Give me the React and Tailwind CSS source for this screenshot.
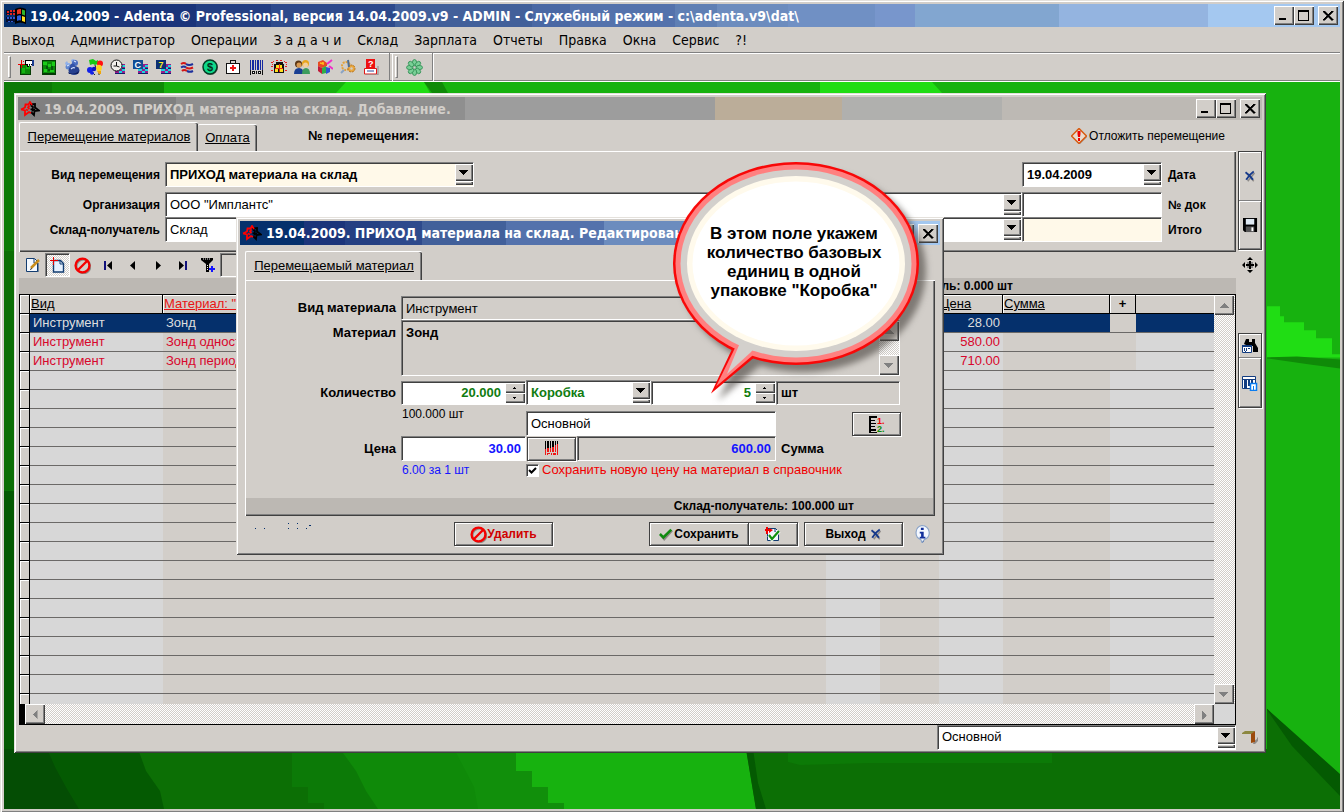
import React from "react";

const frame =
  "shadow-[inset_1px_1px_0_#e4e1dc,inset_-1px_-1px_0_#404040,inset_2px_2px_0_#ffffff,inset_-2px_-2px_0_#808080]";
const sunken =
  "border border-t-[#808080] border-l-[#808080] border-b-white border-r-white shadow-[inset_1px_1px_0_#404040]";
const raised =
  "bg-[#d2cec9] shadow-[inset_1px_1px_0_#ffffff,inset_-1px_-1px_0_#404040,inset_-2px_-2px_0_#808080]";
const framed =
  "border border-[#404040] bg-[#d2cec9] shadow-[inset_1px_1px_0_#ffffff,inset_-1px_-1px_0_#808080,1px_1px_0_#ffffff]";
const dither =
  "bg-[repeating-conic-gradient(#ffffff_0_25%,#d2cec9_0_50%)] bg-[length:2px_2px]";
const captionFont = "font-['DejaVu_Sans_Condensed','Noto_Sans',sans-serif]";

function Icon({ children, size = 16, className = "" }) {
  return (
    <svg width={size} height={size} viewBox="0 0 16 16" aria-hidden="true" className={`shrink-0 ${className}`}>
      {children}
    </svg>
  );
}

/* ---------- toolbar drawings ---------- */

const Stripes = () => (
  <g shapeRendering="crispEdges">
    <path d="M5 5h10v10H5z" fill="#9a1b8c" />
    <path d="M6 6h3v2H6zM12 6h3v2h-3zM9 8h3v2H9zM5 10h4v2H5zM12 10h3v2h-3zM9 12h3v2H9z" fill="#19d6e0" />
    <path d="M5 14h10v1H5zM6 9h3v1H6zM12 9h3v1h-3z" fill="#10206b" />
  </g>
);

const MainIcons = {
  "Рабочее место": (
    <g shapeRendering="crispEdges">
      <path d="M2 5h11v11H2z" fill="#063d04" />
      <path d="M3 6h9v9H3z" fill="#0c8a0a" />
      <path d="M4 9h3v5H4zM8 7h4v3H8z" fill="#15b512" />
      <path d="M7 1h9v6h-2V6h-1v2h-1V6h-1v2H9V6H7z" fill="#000" />
      <path d="M8 2h6v3H8zM10 5h1v2h-1zM12 5h1v2h-1z" fill="#fff" />
      <path d="M14 1h2v6h-2z" fill="#1b3c90" />
      <path d="M0 5h7v1H0zM3 1h1v8H3zM5 2h1v1H5z" fill="#e80000" />
    </g>
  ),
  "Фон": (
    <g shapeRendering="crispEdges">
      <path d="M1 1h14v15H1z" fill="#053b05" />
      <path d="M2 2h12v12H2z" fill="#0c8a0a" />
      <path d="M2 3h4v3H2zM7 5h3v3H7zM11 3h3v4h-3zM3 10h3v3H3zM9 11h4v2H9z" fill="#1bcc18" />
      <path d="M5 7h2v3H5zM10 7h2v4h-2zM7 10h2v2H7z" fill="#04580a" />
    </g>
  ),
  "Пациенты": (
    <g>
      <path d="M1 4l2-2 1 2 2 0-1 4-2 1zM7 1l2-1 3 1-1 3 1 2-3 1z" fill="#8fb0ea" />
      <ellipse cx="4.500" cy="8" rx="3" ry="2.500" fill="#5f86d0" />
      <circle cx="11" cy="4" r="3" fill="#4a6cc0" />
      <ellipse cx="10" cy="11.500" rx="5.500" ry="4.500" fill="#26408f" />
      <circle cx="8.500" cy="7" r="2.500" fill="#3352a8" />
      <path d="M7 10q2-2 4-1M10 2l2 1M3 7l2-1" stroke="#d6e4ff" strokeWidth="1.200" fill="none" />
      <path d="M4 13q5 4 11-1l-1 3H5z" fill="#101f5c" />
    </g>
  ),
  "Шары": (
    <g>
      <path d="M5 13l3 3M8 6l1 4M12 9v7" stroke="#222" fill="none" />
      <path d="M2 1l4-1 3 2 2-1v4l-3 1-2-1-3 1z" fill="#17c914" />
      <circle cx="13" cy="4.500" r="3" fill="#ff1212" />
      <ellipse cx="3" cy="11" rx="3" ry="3" fill="#1220e8" />
      <circle cx="7" cy="10" r="2.200" fill="#0d14c0" />
      <ellipse cx="5" cy="14" rx="2" ry="1.800" fill="#1220e8" />
      <ellipse cx="12" cy="9" rx="2.800" ry="3.200" fill="#ffd21a" />
      <path d="M10 12h4v3h-2z" fill="#f0a50c" />
    </g>
  ),
  "График": (
    <g>
      <Stripes />
      <circle cx="6.500" cy="6.500" r="5.500" fill="#f2f0ec" stroke="#111" />
      <path d="M6.500 3v4H3.500M6.500 7l3 1" stroke="#111" fill="none" />
    </g>
  ),
  "Календарь": (
    <g>
      <Stripes />
      <path d="M0 1h10v9H0z" fill="#114c93" />
      <text x="1.500" y="9" fontSize="9" fontWeight="700" fill="#fff" fontFamily="Liberation Sans, sans-serif">C</text>
    </g>
  ),
  "Неделя": (
    <g>
      <Stripes />
      <path d="M0 1h10v9H0z" fill="#0c2f73" />
      <text x="2.500" y="9" fontSize="9" fontWeight="700" fill="#ffee22" fontFamily="Liberation Sans, sans-serif">7</text>
    </g>
  ),
  "Обмен": (
    <g fill="none" strokeWidth="2">
      <path d="M2 5q3-2 5 0" stroke="#d41616" />
      <path d="M7 5q3 2 7 0" stroke="#1d2f9c" />
      <path d="M2 8.500q3-2 5 0" stroke="#1d2f9c" />
      <path d="M7 8.500q3 2 7 0" stroke="#d41616" />
      <path d="M3 12q2-2 5 0" stroke="#d41616" />
      <path d="M8 12q3 1.500 6 0" stroke="#1d2f9c" />
    </g>
  ),
  "Касса": (
    <g>
      <circle cx="8.500" cy="8.500" r="7.500" fill="#6f6f6f" />
      <circle cx="8" cy="8" r="7" fill="#0fd98a" stroke="#063c25" strokeWidth="1.500" />
      <text x="5" y="12" fontSize="11" fontWeight="700" fill="#04301c" fontFamily="Liberation Sans, sans-serif">$</text>
    </g>
  ),
  "Аптечка": (
    <g shapeRendering="crispEdges">
      <path d="M5 1h6v3h4v11H1V4h4z" fill="#111" />
      <path d="M6 2h4v2H6z" fill="#d2cec9" />
      <path d="M2 5h12v9H2z" fill="#fff" />
      <path d="M7 6h2v2h2v2H9v2H7v-2H5V8h2z" fill="#f01414" />
    </g>
  ),
  "Штрихкод": (
    <g shapeRendering="crispEdges">
      <path d="M2 1h1v10H2zM4 1h2v10H4zM7 1h1v10H7zM9 1h2v10H9zM12 1h1v10h-1zM14 1h1v10h-1z" fill="#1428a0" />
      <path d="M2 11h1v5H2zM14 11h1v5h-1zM4 12h3v3H4zM8 12h1v3H8zM10 12h3v3h-3z" fill="#111" />
      <path d="M5 13h1v1H5zM11 13h1v1h-1z" fill="#fff" />
    </g>
  ),
  "Лаборатория": (
    <g shapeRendering="crispEdges">
      <path d="M5 3h7v2h1v9H3V5h2z" fill="#111" />
      <path d="M5 6h3v3H5zM9 10h3v3H9z" fill="#ffe01c" />
      <path d="M9 6h2v3H9zM4 10h3v3H4z" fill="#ffe01c" />
      <path d="M8 5h1v8H8zM4 9h8v1H4z" fill="#e82a14" />
      <path d="M0 3h2v1H0zM0 7h2v1H0zM0 11h2v1H0zM14 3h2v1h-2zM14 7h2v1h-2zM14 11h2v1h-2zM1 5h1v1H1zM15 5h1v1h-1zM2 2h1v1H2zM13 2h1v1h-1zM5 1h2v1H5zM9 1h2v1H9z" fill="#e82020" />
    </g>
  ),
  "Сотрудники": (
    <g>
      <circle cx="4.500" cy="5" r="3.500" fill="#5a3513" />
      <circle cx="5" cy="6" r="2.500" fill="#d99a52" />
      <path d="M0 15q0-6 5-6t4 6z" fill="#1a3f92" />
      <circle cx="11.500" cy="4.500" r="3.500" fill="#e8a51e" />
      <circle cx="11.500" cy="6" r="2.500" fill="#f3cf9c" />
      <path d="M8 15q0-6 4-6t4 6z" fill="#3d9c5c" />
    </g>
  ),
  "Отчёты": (
    <g>
      <path d="M1 3l5-2 4 3v3L5 9 1 7z" fill="#e84a20" />
      <path d="M1 7l4 2v6l-4-3z" fill="#c01a3a" />
      <path d="M5 9l4-2v7l-4 1z" fill="#2fae48" />
      <path d="M9 8l4 1v4l-4 2z" fill="#2d55d2" />
      <path d="M10 5l5-4M12 7l4 3" stroke="#f02cc8" strokeWidth="2" />
      <path d="M3 4l4 1M6 3v3" stroke="#ffbe1c" strokeWidth="1.500" />
    </g>
  ),
  "Настройка": (
    <g>
      <circle cx="6" cy="7" r="4" fill="none" stroke="#e2a23b" strokeWidth="2" strokeDasharray="2 1" />
      <circle cx="11.500" cy="9.500" r="3.500" fill="#e8a73f" stroke="#b4711d" strokeDasharray="2 1" />
      <path d="M8 1l1 7" stroke="#4d6d92" strokeWidth="2" />
      <path d="M1 14l3-3" stroke="#8aa3c4" strokeWidth="2" />
      <circle cx="11.500" cy="9.500" r="1.200" fill="#d2cec9" />
    </g>
  ),
  "Справка": (
    <g>
      <path d="M3 0h9v9H3z" fill="#ee1111" />
      <text x="5" y="8" fontSize="9" fontWeight="700" fill="#fff" fontFamily="Liberation Sans, sans-serif">?</text>
      <path d="M1.500 9.500h12v5.500h-12z" fill="#fff" stroke="#e01818" />
      <path d="M4 12h7" stroke="#2a4b9a" />
      <path d="M15 7v9H3" stroke="#8a8a8a" fill="none" />
    </g>
  ),
};

const Clover = () => (
  <Icon size={17}>
    {[0, 45, 90, 135, 180, 225, 270, 315].map((a) => (
      <ellipse key={a} cx="8" cy="3.500" rx="2" ry="3" fill="#79cf96" stroke="#2f8d52" strokeWidth="0.800" transform={`rotate(${a} 8 8)`} />
    ))}
  </Icon>
);

const WindowsLogo = () => (
  <svg width="22" height="20" viewBox="0 0 22 20" aria-hidden="true" className="shrink-0">
    <path d="M9 3q5-3 11 0v15q-6-3-11 0z" fill="#000" />
    <path d="M11 4q2-1.500 4-1v5q-2-.500-4 .500z" fill="#e8341c" />
    <path d="M16 3.500l3 1v5l-3-1z" fill="#2fb52a" />
    <path d="M11 10q2-1 4-.500v5q-2-.500-4 .500z" fill="#2a5cd8" />
    <path d="M16 10l3 1v5l-3-1z" fill="#ffdd1c" />
    <path d="M0 4h9v5H0zM0 11h9v5H0z" fill="#061030" />
    <path d="M1 5h2v2H1zM4 4h2v2H4zM7 4h2v2H7zM1 8h2v1H1zM4 7h2v2H4zM7 7h2v2H7z" fill="#e0241c" />
    <path d="M1 11h2v2H1zM4 11h2v2H4zM7 11h2v2H7zM2 15h2v1H2zM5 15h2v1H5z" fill="#3358d0" />
  </svg>
);

const AppMark = () => (
  <svg width="20" height="16" viewBox="0 0 20 16" aria-hidden="true" className="shrink-0" fill="none" strokeWidth="1.800">
    <path d="M10 3.500l5-.500v3.500l4 3-4.500.500-.500 4-3-3" stroke="#000" />
    <path d="M10.500 8.500l2-.500.500-2-2-1.500M12 10l3-2" stroke="#000" />
    <path d="M1 8.500l4-2 .500-3 3 0 1.500-2.500 2 3M1 8.500l4 1V14l4-3 2 1" stroke="#f00" />
    <path d="M9.500 8L8 6.500l1.500-2M8 9.500l-2-1" stroke="#f00" />
  </svg>
);

const NoEntry = ({ size = 17 }) => (
  <Icon size={size}>
    <circle cx="9" cy="9" r="6.500" fill="none" stroke="#8e8a86" strokeWidth="1.500" />
    <circle cx="8" cy="8" r="6.500" fill="none" stroke="#f50000" strokeWidth="2.200" />
    <path d="M3.500 12.500l9-9" stroke="#f50000" strokeWidth="2.200" />
  </Icon>
);

const BlueCross = ({ size = 12 }) => (
  <Icon size={size}>
    <path d="M4 5l9 10M14 4L5 15" stroke="#8e8a86" strokeWidth="2" />
    <path d="M2 3q6 4 10 10M13 2Q7 6 3 13" stroke="#173a8a" strokeWidth="2.600" fill="none" />
  </Icon>
);

/* ---------- shared pieces ---------- */

function CaptionButton({ label, children, className = "" }) {
  return (
    <button type="button" aria-label={label} className={`flex h-[19px] w-5 items-center justify-center ${raised} ${className}`}>
      <svg width="14" height="13" viewBox="0 0 14 13" aria-hidden="true" shapeRendering="crispEdges">{children}</svg>
    </button>
  );
}

function CaptionButtons() {
  return (
    <div className="ml-auto flex pr-0.5">
      <CaptionButton label="Свернуть"><path d="M2 9h7v2H2z" /></CaptionButton>
      <CaptionButton label="Развернуть"><path d="M1 1h11v2H1zM1 3h1v8H1zM11 3h1v8h-1zM1 11h11v1H1z" /></CaptionButton>
      <CaptionButton label="Закрыть" className="ml-1">
        <path d="M2 2h2v1h1v1h1v1h2V4h1V3h1V2h2v1h-1v1h-1v1H9v1H8v1h1v1h1v1h1v1h1v1h-2v-1H9V9H8V8H6v1H5v1H4v1H2v-1h1V9h1V8h1V7h1V6H5V5H4V4H3V3H2z" stroke="#000" strokeWidth="0.500" />
      </CaptionButton>
    </div>
  );
}

function Arrow({ dim = false }) {
  return (
    <svg width="10" height="5" viewBox="0 0 10 5" aria-hidden="true" shapeRendering="crispEdges" fill={dim ? "#808080" : "#000"}>
      <path d="M0 0h9v1H0zM1 1h7v1H1zM2 2h5v1H2zM3 3h3v1H3zM4 4h1v1H4z" />
    </svg>
  );
}

function Combo({ label, value, className = "", selectClass = "", id }) {
  return (
    <div className={`flex h-[25px] min-w-0 ${sunken} ${className}`}>
      <select id={id} aria-label={label} defaultValue={value} className={`min-w-0 flex-1 appearance-none bg-transparent px-1 outline-none ${selectClass}`}>
        <option>{value}</option>
      </select>
      <span className="flex w-[18px] flex-col py-px" aria-hidden="true">
        <span className={`flex flex-1 items-center justify-center ${raised}`}><Arrow /></span>
        <span className={`h-1 ${raised}`} />
      </span>
    </div>
  );
}

function Spin({ label, value, className = "" }) {
  return (
    <div className={`flex h-6 bg-white ${sunken} ${className}`}>
      <input aria-label={label} defaultValue={value} className="min-w-0 flex-1 bg-transparent pr-1 text-right font-bold text-[#107c10] outline-none" />
      <span className="flex w-5 flex-col py-px">
        <button type="button" aria-label="Больше" className={`flex flex-1 items-center justify-center ${raised}`}>
          <svg width="4" height="2" viewBox="0 0 4 2" aria-hidden="true"><path d="M1 0h1v1H1zM0 1h3v1H0z" /></svg>
        </button>
        <button type="button" aria-label="Меньше" className={`flex flex-1 items-center justify-center ${raised}`}>
          <svg width="4" height="2" viewBox="0 0 4 2" aria-hidden="true"><path d="M0 0h3v1H0zM1 1h1v1H1z" /></svg>
        </button>
      </span>
    </div>
  );
}

function ScrollButton({ label, turn, className }) {
  return (
    <button type="button" aria-label={label} className={`flex shrink-0 items-center justify-center ${raised} ${className}`}>
      <span className={turn}><Arrow dim /></span>
    </button>
  );
}

function Handle() {
  return <span className="h-[22px] w-[3px] border border-t-white border-l-white border-r-[#808080] border-b-[#808080]" aria-hidden="true" />;
}

/* ---------- desktop background ---------- */

function Backdrop() {
  return (
    <svg className="absolute inset-0 h-full w-full" viewBox="4 82 1336 726" preserveAspectRatio="none" aria-hidden="true">
      <path d="M4 82h1336v726H4z" fill="#17b20f" />
      <path d="M4 82h48v11H14v157H4z" fill="#0c7a07" />
      <path d="M52 82h112v11H52z" fill="#0f8a08" />
      <path d="M4 250h10v240H4z" fill="#0c6f05" />
      <path d="M4 490h10v262H4z" fill="#045a02" />
      <path d="M346 82h78l6 11h-94z" fill="#20dd14" />
      <path d="M424 82h18l6 11h-16z" fill="#0f8a08" />
      <path d="M820 82h112l10 11H820z" fill="#20dd14" />
      <path d="M4 748h512v22h16v16h16v16h16v6H4z" fill="#118f0b" />
      <path d="M4 748h450l20 38 4 22H4z" fill="#0f8a09" />
      <path d="M4 748h336l16 22 10 20 12 18H4z" fill="#0c7a07" />
      <path d="M4 748h288v38h16v16h16v6H4z" fill="#0c6f05" />
      <path d="M4 748h134l8 22 14 20 4 18H4z" fill="#045a02" />
      <path d="M4 748h43l8 18 12 22 12 20H4z" fill="#044d04" />
      <path d="M746 748h521V708l73 76v24H756z" fill="#0c6f05" />
      <path d="M746 748h7l5 34 8 26h-10zM1267 708l73 65v22l-48-50-25-36z" fill="#045a02" />
      <path d="M788 752h264v10H870l-70 2-12-3z" fill="#0c7a07" />
      <path d="M1267 306h13v10h4v6h20v8h12v8h16v16h8v3h-73z" fill="#20dd14" />
      <path d="M1267 357l30-1 43 3v9l-30-4-43-6z" fill="#0f8a08" />
    </svg>
  );
}

/* ---------- document window ---------- */

const rows = [
  { kind: "Инструмент", name: "Зонд", price: "28.00", selected: true },
  { kind: "Инструмент", name: "Зонд односторонний", price: "580.00" },
  { kind: "Инструмент", name: "Зонд периодонтальный", price: "710.00" },
  ...Array.from({ length: 18 }, () => null),
];

function Grid() {
  const th = "h-[19px] border-b border-r border-black p-0 pl-px text-left font-normal underline shadow-[inset_1px_1px_0_#ffffff]";
  return (
    <div className="border border-t-black border-b-black border-l-black border-r-black">
      <div className="flex">
        <div className="h-[409px] min-w-0 flex-1 overflow-hidden">
          <table className="w-full table-fixed border-separate border-spacing-0 leading-4">
            <colgroup>
              <col className="w-2.5" /><col className="w-[133px]" /><col /><col className="w-[54px]" /><col className="w-[59px]" />
              <col className="w-16" /><col className="w-[107px]" /><col className="w-[26px]" /><col className="w-[78px]" />
            </colgroup>
            <thead>
              <tr>
                <th className={th} aria-label="Указатель" />
                <th className={th}>Вид</th>
                <th className={`${th} text-[#e81414]`}>Материал: "зонд"</th>
                <th className={th}>Кол.</th>
                <th className={th}>Ед.</th>
                <th className={th}>Цена</th>
                <th className={th}>Сумма</th>
                <th className="h-[19px] border-b border-r border-black p-0 text-center font-bold shadow-[inset_1px_1px_0_#ffffff]">+</th>
                <th className="h-[19px] border-b border-black p-0 shadow-[inset_0_1px_0_#ffffff]" aria-label="Прочее" />
              </tr>
            </thead>
            <tbody>
              {rows.map((r, i) => {
                const sel = r && r.selected;
                const base = "h-[19px] overflow-hidden border-b border-[#6b6967] p-0 whitespace-nowrap";
                const ink = sel ? "text-[#dedede]" : "text-[#d8062c]";
                const light = sel ? "bg-[#05306c]" : "bg-[#d7d7d7]";
                const dark = sel ? "bg-[#05306c]" : "bg-[#d2cec9]";
                return (
                  <tr key={i}>
                    <td className="h-[19px] border-r border-b border-black p-0 shadow-[inset_1px_1px_0_#ffffff]" />
                    <td className={`${base} ${ink} ${light} pl-[3px]`}>{r && r.kind}</td>
                    <td className={`${base} ${ink} ${dark} pl-[3px]`}>{r && r.name}</td>
                    <td className={`${base} ${light}`} />
                    <td className={`${base} ${dark}`} />
                    <td className={`${base} ${ink} ${light} pr-[3px] text-right`}>{r && r.price}</td>
                    <td className={`${base} ${dark}`} />
                    <td className={`${base} ${r ? "bg-[#d2cec9]" : "bg-[#d7d7d7]"}`} />
                    <td className={`${base} ${light}`} />
                  </tr>
                );
              })}
            </tbody>
          </table>
        </div>
        <div className={`flex w-[21px] flex-col justify-between pr-px ${dither}`}>
          <ScrollButton label="Вверх" turn="rotate-180" className="h-5 w-5" />
          <ScrollButton label="Вниз" turn="" className="h-5 w-5" />
        </div>
      </div>
      <div className="flex h-5">
        <span className="w-[5px] bg-black" />
        <div className={`flex flex-1 justify-between ${dither}`}>
          <ScrollButton label="Влево" turn="rotate-90" className="h-5 w-5" />
          <ScrollButton label="Вправо" turn="-rotate-90" className="h-5 w-5" />
        </div>
        <span className="w-[21px] bg-[#d7d7d7]" />
      </div>
    </div>
  );
}

const NavIcons = {
  "Правка": (
    <g>
      <path d="M1.500 1.500h8l3 3v10h-11z" fill="#f4f9ff" stroke="#123c70" />
      <path d="M9 2v4h4M13 15V6" fill="none" stroke="#123c70" />
      <path d="M6 11l8-8" stroke="#c98d1c" strokeWidth="2.500" />
      <path d="M5 12.500l2-1" stroke="#333" />
    </g>
  ),
  "Новый": (
    <g>
      <path d="M3.500 3.500h7l3 3v8.500h-10z" fill="#e6f1ff" stroke="#123c70" strokeWidth="1.400" />
      <path d="M10 3v4h4" fill="none" stroke="#123c70" />
      <path d="M0 3h8v1H0zM3 0h1v8H3z" fill="#e80000" />
    </g>
  ),
};

function DocumentToolbar() {
  const btn = "flex h-6 w-[25px] items-center justify-center";
  return (
    <div className="flex h-[26px] items-center pl-px">
      <button type="button" aria-label="Правка" className={btn}><Icon>{NavIcons["Правка"]}</Icon></button>
      <button type="button" aria-label="Новый" className={`${btn} ${sunken} ${dither}`}><Icon>{NavIcons["Новый"]}</Icon></button>
      <button type="button" aria-label="Удалить запись" className={btn}><NoEntry /></button>
      <button type="button" aria-label="Первая" className={btn}>
        <Icon><path d="M4 4h2v9H4z" fill="#10107a" /><path d="M12 4v9L7 8.500z" /></Icon>
      </button>
      <button type="button" aria-label="Предыдущая" className={btn}><Icon><path d="M10 4v9L5 8.500z" /></Icon></button>
      <button type="button" aria-label="Следующая" className={btn}><Icon><path d="M6 4v9l5-4.500z" /></Icon></button>
      <button type="button" aria-label="Последняя" className={btn}>
        <Icon><path d="M10 4h2v9h-2z" fill="#10107a" /><path d="M4 4v9l5-4.500z" /></Icon>
      </button>
      <button type="button" aria-label="Фильтр" className={btn}>
        <Icon>
          <path d="M1 1h12v2l-4 4v8H6V7L1 3z" />
          <path d="M3 2h7M7.500 8v5" stroke="#eee" strokeDasharray="1 1" />
          <path d="M9 11h6v2H9zM11 9h2v6h-2z" fill="#1414ff" />
        </Icon>
      </button>
      <span className={`h-6 w-[620px] ${sunken}`} />
    </div>
  );
}

function SideTools() {
  return (
    <div className="flex w-6 flex-col items-center">
      <div className="flex h-[99px] w-6 flex-col border border-[#404040] shadow-[1px_1px_0_#ffffff]">
        <button type="button" aria-label="Закрыть документ" className="flex flex-1 items-center justify-center border-b border-[#808080] shadow-[inset_1px_1px_0_#ffffff]">
          <BlueCross />
        </button>
        <button type="button" aria-label="Сохранить документ" className="flex flex-1 items-center justify-center shadow-[inset_1px_1px_0_#ffffff,inset_-1px_-1px_0_#808080]">
          <Icon size={15}>
            <path d="M0 0h15v15H2l-2-2z" />
            <path d="M3 1h9v6H3z" fill="#dfe9f2" />
            <path d="M3 9h9v6H3z" fill="#555" />
            <path d="M9 10h2v4H9z" fill="#fff" />
          </Icon>
        </button>
      </div>
      <button type="button" aria-label="Переместить" className="mt-[7px] flex h-4 w-4 items-center justify-center">
        <Icon>
          <path d="M8 0l3 3H5zM8 16l3-3H5zM0 8l3-3v6zM16 8l-3-3v6z" />
          <path d="M7 4h2v8H7zM4 7h8v2H4z" />
          <path d="M5 5h2v2H5zM9 5h2v2H9zM5 9h2v2H5zM9 9h2v2H9z" fill="#888" />
        </Icon>
      </button>
      <div className="mt-[60px] flex h-[75px] w-6 flex-col border border-[#404040] shadow-[1px_1px_0_#ffffff]">
        <button type="button" aria-label="Найти" className="flex h-6 items-center justify-center border-b border-[#808080] shadow-[inset_1px_1px_0_#ffffff]">
          <Icon>
            <path d="M4 1h3v3h3V1h3v4l3 5v4h-5V8H6L2 6z" />
            <path d="M.500 7.500h9v7h-9z" fill="#fff" stroke="#123c80" />
            <path d="M0 7h10v2H0zM2 10h1v3H2zM4 10h1v3H4zM6 10h2v1H6zM3 13h1v1H3z" fill="#123c80" />
          </Icon>
        </button>
        <button type="button" aria-label="Список" className="flex flex-1 items-center justify-center shadow-[inset_1px_1px_0_#ffffff,inset_-1px_-1px_0_#808080]">
          <Icon>
            <path d="M.500 1.500h13v12H.500z" fill="#fff" stroke="#123c80" />
            <path d="M1 4h13v1H1zM2 5h3v8H2zM6 5h2v6H6zM9 5h2v4H9z" fill="#123c80" />
            <path d="M8.500 8.500h6v7h-6z" fill="#fff" stroke="#0a7cf0" strokeWidth="1.500" />
            <path d="M11 11h1v4h-1z" fill="#0a7cf0" />
          </Icon>
        </button>
      </div>
    </div>
  );
}

function DocumentWindow() {
  const label = "w-[140px] shrink-0 text-right text-xs font-bold";
  const right = "w-[74px] shrink-0 pl-1.5 text-xs font-bold";
  return (
    <section className={`relative mt-[11px] mr-[74px] ml-2.5 bg-[#d2cec9] p-1 ${frame}`} aria-label="Приход материала на склад">
      <header className={`flex h-[23px] items-center bg-[linear-gradient(90deg,#808080_0_12.7%,#8f8f8f_0_35.9%,#9d9d9d_0_56%,#bbad99_0_66.2%,#b0b0ae_0_79.1%,#bdb9b4_0)] pl-0.5 ${captionFont}`}>
        <AppMark />
        <h2 className="pl-1 text-sm leading-5 font-bold text-[#d2cec9]">19.04.2009. ПРИХОД материала на склад. Добавление.</h2>
        <CaptionButtons />
      </header>
      <div className="flex h-[31px] items-end pl-px">
        <a href="#move" className="flex h-[29px] w-[179px] items-center justify-center rounded-t-xs border-t border-l border-white underline shadow-[inset_-1px_0_0_#404040,inset_-2px_0_0_#808080]">Перемещение материалов</a>
        <a href="#pay" className="flex h-[27px] w-[59px] items-center justify-center rounded-t-xs border-t border-white underline shadow-[inset_-1px_0_0_#404040,inset_-2px_0_0_#808080]">Оплата</a>
        <b className="self-center pl-[51px]">№ перемещения:</b>
        <button type="button" className="mr-[37px] ml-auto flex items-center gap-0.5 self-center text-xs">
          <Icon>
            <path d="M9 2l7 7-7 7-7-7z" fill="#8e8a86" />
            <path d="M8 .500L15.500 8 8 15.500.500 8z" fill="#e9dccf" stroke="#d85a10" strokeWidth="1.500" />
            <path d="M6.500 3h3v3L9 9H7l-.500-3zM7 10h2v3H7z" fill="#f00000" />
          </Icon>
          Отложить перемещение
        </button>
      </div>
      <div className="flex items-start justify-between gap-0.5 pl-px">
        <div className="min-w-0 flex-1">
          <div className="flex h-[101px] flex-col border-t border-l border-white pt-2.5 shadow-[inset_-1px_-1px_0_#404040,inset_-2px_-2px_0_#808080]">
            <div className="flex items-center">
              <label htmlFor="move-kind" className={label}>Вид перемещения</label>
              <Combo id="move-kind" value="ПРИХОД материала на склад" className="ml-[5px] w-[309px] bg-[#fff9e9]" selectClass="font-bold" />
              <Combo id="move-date" value="19.04.2009" className="ml-auto w-[140px] bg-white" selectClass="font-bold" />
              <label htmlFor="move-date" className={right}>Дата</label>
            </div>
            <div className="mt-[5px] flex items-center">
              <label htmlFor="org" className={label}>Организация</label>
              <Combo id="org" value={'ООО "Имплантс"'} className="ml-[5px] flex-1 bg-white" />
              <input id="doc-no" className={`h-[25px] w-[140px] bg-white px-1 ${sunken}`} />
              <label htmlFor="doc-no" className={right}>№ док</label>
            </div>
            <div className="flex items-center">
              <label htmlFor="store" className={label}>Склад-получатель</label>
              <Combo id="store" value="Склад" className="ml-[5px] flex-1 bg-white" />
              <input id="total" className={`h-[25px] w-[140px] bg-[#fff9e9] px-1 ${sunken}`} />
              <label htmlFor="total" className={right}>Итого</label>
            </div>
          </div>
          <DocumentToolbar />
          <p className="flex h-4 items-center justify-end bg-[#bcb8b3] pr-[223px] text-xs font-bold">Склад-получатель: 0.000 шт</p>
          <Grid />
        </div>
        <SideTools />
      </div>
      <footer className="flex h-6 items-center justify-end">
        <Combo label="Цены" value="Основной" className="w-[299px] bg-white" />
        <button type="button" aria-label="Выйти" className="ml-1.5 h-4 w-5">
          <Icon>
            <path d="M12 12l3-2V8l1 1v3l-3 3h-2z" fill="#8e8a86" />
            <path d="M0 4l3-2h10l-3 3H0z" fill="#8c8840" />
            <path d="M9 5l4-3v11l-4 1z" fill="#9c4a0c" />
          </Icon>
        </button>
      </footer>
    </section>
  );
}

/* ---------- edit dialog ---------- */

function EditDialog() {
  const label = "w-[155px] shrink-0 pr-[5px] text-right font-bold";
  return (
    <section role="dialog" aria-label="Редактирование" className={`absolute top-[135px] left-[232px] h-[338px] w-[708px] bg-[#d2cec9] p-1 ${frame}`}>
      <header className={`flex h-6 items-center bg-[linear-gradient(90deg,#05306c_0_9.1%,#1b347a_0_15%,#243f82_0_20%,#2e4a8c_0_26%,#42609a_0_38%,#5472ac_0_52%,#6c8cbe_0_68%,#82a6d0_0_80%,#94b4e0_0_90%,#a4c8f0_0)] pl-0.5 ${captionFont}`}>
        <AppMark />
        <h2 className="pl-1 text-sm leading-5 font-bold text-white">19.04.2009. ПРИХОД материала на склад. Редактирование.</h2>
        <CaptionButtons />
      </header>
      <div className="px-[5px] pt-1.5">
        <a href="#item" className="flex h-[29px] w-[177px] items-center justify-center rounded-t-xs border-t border-l border-white underline shadow-[inset_-1px_0_0_#404040,inset_-2px_0_0_#808080]">Перемещаемый материал</a>
        <div className="border-t border-l border-white pt-[15px] pb-0.5 shadow-[inset_-1px_-1px_0_#404040,inset_-2px_-2px_0_#808080]">
          <div className="flex items-center">
            <label htmlFor="item-kind" className={label}>Вид материала</label>
            <input id="item-kind" defaultValue="Инструмент" className={`h-6 w-[499px] bg-transparent px-1 ${sunken}`} />
          </div>
          <div className="flex items-start">
            <label htmlFor="item-name" className={`${label} pt-[5px]`}>Материал</label>
            <div className={`flex h-14 w-[499px] ${sunken}`}>
              <textarea id="item-name" defaultValue="Зонд" className="flex-1 resize-none bg-transparent px-1 pt-1 font-bold outline-none" />
              <div className={`flex w-5 flex-col justify-between ${dither}`}>
                <ScrollButton label="Выше" turn="rotate-180" className="h-5 w-5" />
                <ScrollButton label="Ниже" turn="" className="h-5 w-5" />
              </div>
            </div>
          </div>
          <div className="mt-1 flex items-center">
            <span className={label}>Количество</span>
            <Spin label="Количество" value="20.000" className="w-[125px]" />
            <Combo label="Упаковка" value="Коробка" className="h-6 w-[125px] bg-white" selectClass="font-bold text-[#107c10]" />
            <Spin label="Единиц в упаковке" value="5" className="w-[125px]" />
            <input aria-label="Базовая единица" defaultValue="шт" className={`h-6 w-[124px] bg-transparent px-1 font-bold ${sunken}`} />
          </div>
          <div className="flex h-[31px] items-end pl-[155px]">
            <span className="w-[125px] self-start pt-px pl-px text-xs leading-4">100.000 шт</span>
            <input aria-label="Вид цены" defaultValue="Основной" className={`h-[25px] w-[250px] bg-white px-1 ${sunken}`} />
            <button type="button" aria-label="Единицы измерения" className={`mr-[34px] ml-auto flex h-6 w-[49px] items-center justify-center ${framed}`}>
              <svg width="17" height="17" viewBox="0 0 17 17" aria-hidden="true">
                <path d="M1 0h8v2H3v2h4v1H3v2h5v1H3v2h4v1H3v2h5v2H3v1h6v1H1z" />
                <text x="9" y="8" fontSize="9" fontWeight="700" fill="#f00000" fontFamily="Liberation Sans, sans-serif">1.</text>
                <text x="9" y="16" fontSize="9" fontWeight="700" fill="#0a8a0a" fontFamily="Liberation Sans, sans-serif">2.</text>
              </svg>
            </button>
          </div>
          <div className="flex items-center">
            <label htmlFor="price" className={label}>Цена</label>
            <input id="price" defaultValue="30.00" className={`h-[25px] w-[125px] bg-white px-1 text-right font-bold text-[#1414ff] ${sunken}`} />
            <button type="button" aria-label="Штрихкод цены" className={`mx-px flex h-6 w-[49px] items-center justify-center ${framed}`}>
              <svg width="14" height="15" viewBox="0 0 14 15" aria-hidden="true" shapeRendering="crispEdges">
                <path d="M0 0h1v8H0zM2 0h2v7H2zM5 0h1v7H5zM7 0h2v6H7zM10 0h1v6h-1zM12 0h1v5h-1z" />
                <path d="M0 8h1v6H0zM2 7h2v4H2zM5 7h1v4H5zM7 6h2v5H7zM10 4h1v7h-1zM12 3h1v11h-1zM2 12h3v1H3v1H2zM6 12h1v2H6zM8 12h3v2H8z" fill="#f01414" />
              </svg>
            </button>
            <input id="sum" defaultValue="600.00" className={`h-[25px] w-[199px] bg-transparent px-1 text-right font-bold text-[#1414ff] ${sunken}`} />
            <label htmlFor="sum" className="pl-[5px] font-bold">Сумма</label>
          </div>
          <div className="flex h-[18px] items-center pl-[155px]">
            <span className="w-[125px] pl-px text-xs text-[#1414ff]">6.00 за 1 шт</span>
            <label className="flex items-center gap-[3px] text-[#f00000]">
              <span className={`relative flex h-[13px] w-[13px] bg-white ${sunken}`}>
                <input type="checkbox" defaultChecked className="peer absolute inset-0 appearance-none" />
                <svg viewBox="0 0 11 11" className="hidden h-[11px] w-[11px] peer-checked:block" aria-hidden="true"><path d="M2 5l2.500 2.500L9 3" stroke="#000" strokeWidth="2" fill="none" /></svg>
              </span>
              Сохранить новую цену на материал в справочник
            </label>
          </div>
          <p className="mt-[19px] mr-0.5 flex h-4 items-center justify-end bg-[#bcb8b3] pr-[79px] text-xs font-bold">Склад-получатель: 100.000 шт</p>
        </div>
        <div className="mt-1.5 flex items-center">
          <svg width="72" height="10" viewBox="0 0 72 10" aria-hidden="true" shapeRendering="crispEdges" className="mb-3.5">
            <path d="M10 6h1v1h-1zM19 6h1v1h-1zM43 1h1v1h-1zM43 6h1v1h-1zM52 1h1v1h-1zM52 6h1v1h-1zM61 6h1v1h-1zM64 3h2v1h-2z" fill="#05306c" />
          </svg>
          <button type="button" className={`ml-[137px] flex h-6 w-[99px] items-center justify-center text-xs font-bold text-[#d00000] ${framed}`}>
            <NoEntry />Удалить
          </button>
          <div className="ml-24 flex">
            <button type="button" className={`flex h-6 w-[100px] items-center justify-center gap-px text-xs font-bold ${framed}`}>
              <Icon size={14}>
                <path d="M2 9l4 5L15 4" stroke="#8e8a86" strokeWidth="2.500" fill="none" />
                <path d="M1 8l4 4 9-9" stroke="#108a10" strokeWidth="3" fill="none" />
              </Icon>
              Сохранить
            </button>
            <button type="button" aria-label="Сохранить и добавить" className={`-ml-px flex h-6 w-[50px] items-center justify-center ${framed}`}>
              <Icon>
                <path d="M2.500 2.500h8l3 3v9h-11z" fill="#eef5ff" stroke="#123c70" />
                <path d="M10 2v4h4" stroke="#123c70" fill="none" />
                <path d="M1 1h2v2h3v2H3v3H1V5H0V3h1zM4 2l4 2-4 3z" fill="#f00000" />
                <path d="M4 9l3 4 7-8" stroke="#fff" strokeWidth="4" fill="none" />
                <path d="M4 9l3 4 7-8" stroke="#109010" strokeWidth="2.200" fill="none" />
              </Icon>
            </button>
          </div>
          <button type="button" className={`ml-1.5 flex h-6 w-[99px] items-center justify-center gap-1 text-xs font-bold ${framed}`}>
            Выход<BlueCross />
          </button>
          <button type="button" aria-label="Информация" className="ml-2.5">
            <Icon size={18}>
              <path d="M10 14l-1.500 2L7 14z" fill="#123c90" />
              <path d="M8 .500a7 6.500 0 0 1 2 12.500L8 15.500 7 13A6.500 6.500 0 0 1 8 .500z" fill="#f4f8ff" stroke="#8ba4c8" />
              <path d="M7 2.500h2.500v2H7zM6 6h3.500v4.500H11V12H6v-1.500h1.200v-3H6z" fill="#12309c" />
            </Icon>
          </button>
        </div>
      </div>
    </section>
  );
}

/* ---------- callout ---------- */

function Callout() {
  return (
    <aside className="absolute top-[73px] left-[656px] flex h-[250px] w-[290px] justify-center">
      <svg className="absolute inset-0 drop-shadow-[7px_7px_3px_rgba(70,65,60,0.6)]" width="290" height="250" viewBox="660 155 290 250" aria-hidden="true">
        <g fill="#f80808">
          <ellipse cx="796" cy="263.500" rx="123" ry="101.500" />
          <path d="M733 347L711 393.500 753 358.500 762 340z" />
        </g>
        <g fill="#ff8080">
          <ellipse cx="796" cy="263.500" rx="120.500" ry="99" />
          <path d="M735.500 347L716 386.500 752 356 762 340z" />
        </g>
        <g fill="#d3d0cc">
          <ellipse cx="796" cy="263.500" rx="115.500" ry="94" />
          <path d="M739.500 344L727 374 750 353 762 340z" />
        </g>
        <ellipse cx="796" cy="263.500" rx="109" ry="87.500" fill="#fffaec" />
        <ellipse cx="796" cy="263.500" rx="103.500" ry="82" fill="#ffffff" />
      </svg>
      <p className="relative mr-[22px] w-[190px] pt-[69px] text-center text-[17px] leading-[19px] font-bold">
        В этом поле укажем количество базовых единиц в одной упаковке "Коробка"
      </p>
    </aside>
  );
}

/* ---------- application ---------- */

const menu = ["Выход", "Администратор", "Операции", "З а д а ч и", "Склад", "Зарплата", "Отчеты", "Правка", "Окна", "Сервис", "?!"];

export default function App() {
  return (
    <main className={`flex min-h-screen flex-col bg-[#d2cec9] p-1 font-['Liberation_Sans',Arial,sans-serif] text-[13px] leading-4 text-black ${frame}`}>
      <header className={`flex h-[23px] items-center bg-[linear-gradient(90deg,#05306c_0_7.9%,#1b347a_0_14.4%,#243f82_0_20%,#2e4a8c_0_29.3%,#42609a_0_39.5%,#4a68a4_0_42.4%,#5472ac_0_50.2%,#5f7fb4_0_53.4%,#6c8cbe_0_58.7%,#7090c4_0_65.2%,#7896cc_0_68.2%,#82a6d0_0_79%,#94b4e0_0_90.1%,#a4c8f0_0)] pl-0.5 ${captionFont}`}>
        <WindowsLogo />
        <h1 className="pl-0.5 text-sm leading-5 font-bold text-white">
          19.04.2009 - Adenta © Professional, версия 14.04.2009.v9 - ADMIN - Служебный режим - c:\adenta.v9\dat\
        </h1>
        <CaptionButtons />
      </header>
      <nav className={`flex h-[25px] items-center gap-4 pl-2 text-sm leading-5 ${captionFont}`}>
        {menu.map((m) => (
          <button key={m} type="button">{m}</button>
        ))}
      </nav>
      <div className="flex h-[30px] border-t border-b border-t-[#808080] border-b-[#ffffff] shadow-[inset_0_1px_0_#ffffff,inset_0_-1px_0_#808080]">
        <div className="flex w-[386px] items-center gap-[7px] border-r border-[#808080] pl-1">
          <Handle />
          {Object.entries(MainIcons).map(([name, art]) => (
            <button key={name} type="button" aria-label={name}><Icon>{art}</Icon></button>
          ))}
        </div>
        <div className="ml-0.5 flex w-[41px] items-center gap-2 border-r border-l border-r-[#808080] border-l-white pl-0.5">
          <Handle />
          <button type="button" aria-label="Лицензия"><Clover /></button>
        </div>
        <span className="border-l border-white" />
      </div>
      <div className="relative flex-1 overflow-hidden pb-14">
        <Backdrop />
        <DocumentWindow />
        <EditDialog />
        <Callout />
      </div>
    </main>
  );
}
